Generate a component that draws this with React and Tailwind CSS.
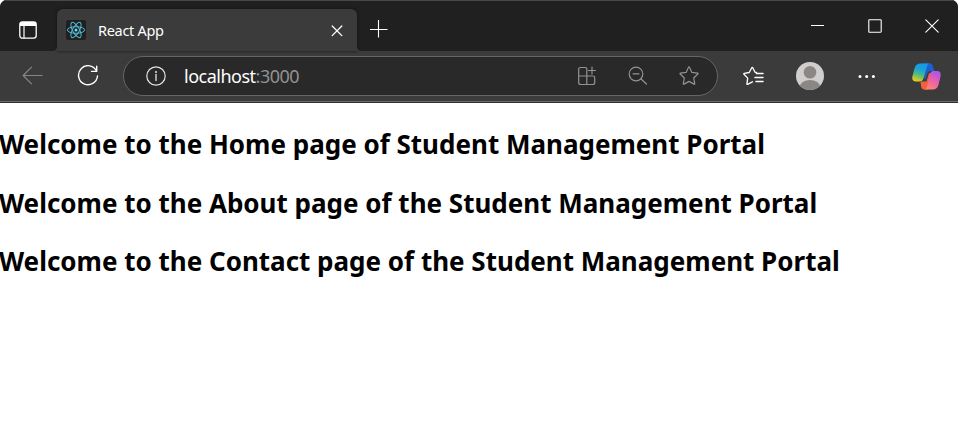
const stroke = { fill: 'none', stroke: 'currentColor', strokeLinecap: 'round', strokeLinejoin: 'round' };

function TabStrip() {
  return (
    <div className="flex h-[51px] border-t border-[#484848] bg-[#202020] text-white">
      <div className="flex w-[57px] pl-[19px] pt-[20px]">
        <svg width="18" height="18" viewBox="0 0 18 18" {...stroke}>
          <rect x="0.8" y="0.8" width="16.4" height="16.4" rx="2.6" strokeWidth="1.3" />
          <path d="M1 2.8Q1 1 3 1h12q2 0 2 1.800V5H1z" fill="currentColor" stroke="none" />
          <path d="M5 5v12" strokeWidth="1.2" />
        </svg>
      </div>
      <div className="relative mt-[8px] flex h-[42px] w-[300px] rounded-t-[6px] bg-[#3b3b3b] shadow-[0_0_3px_#111]">
        <svg className="absolute -left-[5px] bottom-0" width="5" height="5">
          <path d="M5 0v5H0Q5 5 5 0" fill="#3b3b3b" />
        </svg>
        <svg className="absolute -right-[5px] bottom-0" width="5" height="5">
          <path d="M0 0v5h5Q0 5 0 0" fill="#3b3b3b" />
        </svg>
        <div className="ml-[9px] mt-[11px] h-5 w-5 rounded-[2px] bg-[#202020]">
          <svg width="20" height="20" viewBox="0 0 20 20" fill="none" stroke="#50b9d3" strokeWidth="1">
            <ellipse cx="10" cy="10" rx="8.600" ry="3.300" />
            <ellipse cx="10" cy="10" rx="8.600" ry="3.300" transform="rotate(60 10 10)" />
            <ellipse cx="10" cy="10" rx="8.600" ry="3.300" transform="rotate(120 10 10)" />
            <circle cx="10" cy="10" r="1.500" fill="#61dafb" stroke="none" />
          </svg>
        </div>
        <span className="ml-[12px] mt-[10px] w-[200px] whitespace-nowrap text-[14.5px] leading-[22px] tracking-[-0.3px]">React App</span>
        <svg className="ml-[33px] mt-[16px]" width="12" height="12" viewBox="0 0 12 12" {...stroke} strokeWidth="1.3">
          <path d="M1.200 1l9.600 9.600M10.800 1L1.200 10.600" />
        </svg>
      </div>
      <svg className="ml-[13px] mt-[19px]" width="18" height="18" viewBox="0 0 18 18" {...stroke} strokeWidth="1.1" strokeLinecap="butt">
        <path d="M8.500 0v17.500M0 9.500h17.500" />
      </svg>
      <div className="ml-auto flex pr-[19px] pt-[18px]">
        <svg className="mr-[44px]" width="13" height="14" {...stroke} strokeLinecap="butt">
          <path d="M0 6.500h13" />
        </svg>
        <svg className="mr-[43px]" width="14" height="14" {...stroke} strokeWidth="1.1">
          <rect x="0.800" y="0.800" width="12.400" height="12.400" rx="0.600" />
        </svg>
        <svg width="14" height="14" {...stroke} strokeWidth="1.1">
          <path d="M0.800 0.800l12.400 12.400M13.200 0.800L0.800 13.200" />
        </svg>
      </div>
    </div>
  );
}

function AddressBar() {
  return (
    <div className="ml-[24px] mt-[5px] flex h-10 w-[595px] items-center rounded-full border border-[#666] bg-[#292929] text-[#929292]">
      <svg className="ml-[22px] text-[#e4e4e4]" width="20" height="20" viewBox="0 0 20 20" {...stroke} strokeWidth="1.200">
        <circle cx="10" cy="10" r="9.200" />
        <path d="M10 8.500v6" strokeWidth="1.300" />
        <circle cx="10" cy="5.900" r="1" fill="currentColor" stroke="none" />
      </svg>
      <span className="ml-[18px] w-[200px] whitespace-nowrap text-[18px] leading-6 tracking-[-0.5px]">
        <span className="text-white">localhost</span>:3000
      </span>
      <svg className="ml-[194px]" width="18" height="20" viewBox="0 0 18 20" {...stroke} strokeWidth="1.200">
        <path d="M8.800 10V3.200Q8.800 1.500 7.100 1.500H2.400Q.700 1.500.700 3.200v13.300q0 2 2 2h12q2 0 2-2V11.700q0-1.700-1.700-1.700H.700M8.800 10v8.500M14 1v7M10.500 4.500h7" />
      </svg>
      <svg className="ml-[32px]" width="20" height="20" viewBox="0 0 20 20" {...stroke} strokeWidth="1.200">
        <circle cx="8" cy="8" r="6.800" />
        <path d="M13 13l5.500 5M5 7.800h6" />
      </svg>
      <svg className="ml-[30px]" width="22" height="22" viewBox="0 0 22 22" {...stroke} strokeWidth="1.200">
        <path d="M11 1.900q.4 0 .6.500l2.300 5 5.600.7q.9.200.3.900l-4.100 4 1 5.600q.1.900-.7.500l-5-2.700-5 2.700q-.8.400-.7-.5l1-5.600-4.100-4q-.6-.7.300-.9l5.600-.7 2.300-5q.2-.5.600-.5z" />
      </svg>
    </div>
  );
}

function Copilot() {
  return (
    <svg className="ml-[36px] mt-[12px]" width="30" height="27" viewBox="0 0 30 27">
      <defs>
        <linearGradient id="cool" x1="0.600" y1="0" x2="0.300" y2="1">
          <stop offset="0" stopColor="#1698e9" />
          <stop offset="0.350" stopColor="#19a4d8" />
          <stop offset="0.650" stopColor="#54bd78" />
          <stop offset="1" stopColor="#edcc16" />
        </linearGradient>
        <linearGradient id="warm" x1="0.700" y1="0" x2="0.300" y2="1">
          <stop offset="0" stopColor="#a755ef" />
          <stop offset="0.450" stopColor="#e65eb0" />
          <stop offset="1" stopColor="#ff846f" />
        </linearGradient>
        <linearGradient id="blue" x1="0" y1="0" x2="1" y2="1">
          <stop offset="0" stopColor="#126fc9" />
          <stop offset="1" stopColor="#2450dd" />
        </linearGradient>
      </defs>
      <path d="M10 0.500h8q2 0 2.700 2.200L22.500 8H19q-3 0-4 3l-2 7z" fill="url(#blue)" />
      <path d="M8.500 18.500h6L17 10l3 1-4 15.500h-4q-2 0-2.700-2.200z" fill="#f4603d" />
      <path d="M8.500 0.500H18q-2.300 0-3.200 3.200l-3.300 11.500q-1 3.300-4 3.300H4q-4.500 0-3.600-5L2.500 5.500q1.300-5 6-5z" fill="url(#cool)" />
      <path d="M21 8h4q4.500 0 3.600 5l-2 8.500q-1.300 5-6 5H12q2.300 0 3.200-3.200L18 11q.8-3 3-3z" fill="url(#warm)" />
    </svg>
  );
}

function Toolbar() {
  return (
    <div className="flex h-[52px] border-b border-[#303030] bg-[#3b3b3b] text-white shadow-[inset_0_-1px_0_#6c6c6c]">
      <svg className="ml-[22px] mt-[15px] text-[#858585]" width="22" height="19" viewBox="0 0 22 19" {...stroke} strokeWidth="1.200">
        <path d="M9.500 1.200L1.200 9.500l8.300 8.300M1.200 9.500h19" />
      </svg>
      <svg className="ml-[33px] mt-[14px]" width="22" height="22" viewBox="0 0 22 22" {...stroke} strokeWidth="1.400">
        <path d="M19.700 6.300A9.500 9.500 0 1 0 20.500 11M19.700 1.200v5.200h-5.200" />
      </svg>
      <AddressBar />
      <svg className="ml-[24px] mt-[14px]" width="22" height="22" viewBox="0 0 22 22" {...stroke} strokeWidth="1.300">
        <path d="M14.500 7.500L13 7.200 10.800 2.700q-.5-.8-1 0L7.200 7.500l-4.900.8q-1 .2-.3.900l3.700 3.900-.8 5.700q-.1.900.7.500l4.800-2.500" />
        <path d="M14.500 8.500h6.500M13 12.500h8M14 16.500h7" strokeWidth="1.500" />
      </svg>
      <svg className="ml-[32px] mt-[11px]" width="28" height="28" viewBox="0 0 28 28">
        <defs>
          <clipPath id="avatar"><circle cx="14" cy="14" r="14" /></clipPath>
        </defs>
        <g clipPath="url(#avatar)">
          <rect width="28" height="28" fill="#d1cfcd" />
          <circle cx="14" cy="10.300" r="6.300" fill="#8b8784" />
          <ellipse cx="14" cy="25" rx="10.300" ry="7" fill="#8b8784" />
        </g>
      </svg>
      <svg className="ml-[34px] mt-[23px]" width="18" height="5" fill="currentColor">
        <circle cx="2" cy="2.500" r="1.500" />
        <circle cx="8.700" cy="2.500" r="1.500" />
        <circle cx="15.400" cy="2.500" r="1.500" />
      </svg>
      <Copilot />
    </div>
  );
}

export default function App() {
  return (
    <div className="h-[436px] w-[958px] overflow-hidden bg-white font-['Noto_Sans','Open_Sans',sans-serif]">
      <div className="overflow-hidden rounded-t-[7px] bg-[#202020]">
        <TabStrip />
        <Toolbar />
      </div>
      <main className="-ml-px flex flex-col gap-[22.500px] whitespace-nowrap pt-[23px] text-[26px] font-bold leading-[36px] text-black">
        <h1 className="tracking-[0px]">Welcome to the Home page of Student Management Portal</h1>
        <h1 className="tracking-[0px]">Welcome to the About page of the Student Management Portal</h1>
        <h1 className="tracking-[0px]">Welcome to the Contact page of the Student Management Portal</h1>
      </main>
    </div>
  );
}
